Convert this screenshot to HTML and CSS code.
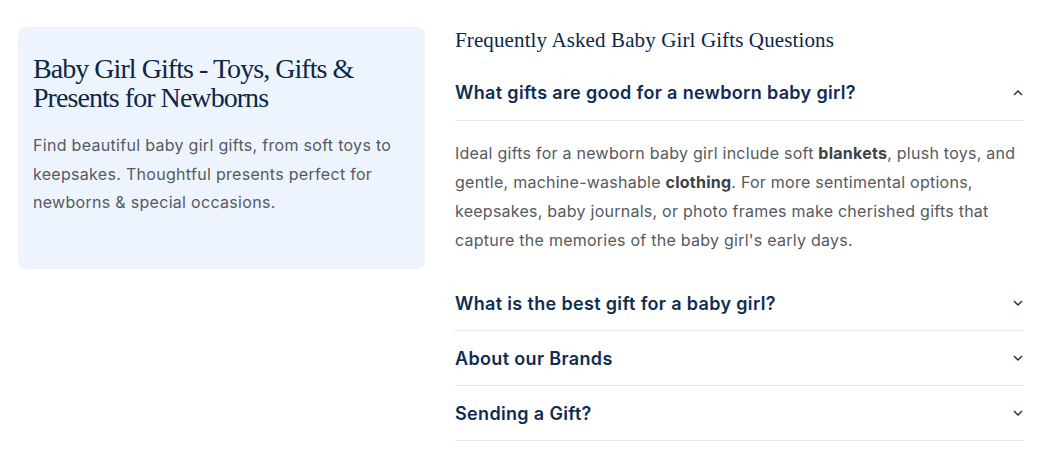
FILE: index.html
```html
<!DOCTYPE html>
<html>
<head>
<meta charset="utf-8">
<link rel="stylesheet" href="styles.css">
</head>
<body>
<div class="page">
  <aside class="card">
    <h1 class="card-title">Baby Girl Gifts - Toys, Gifts &amp; Presents for Newborns</h1>
    <p class="card-text">Find beautiful baby girl gifts, from soft toys to keepsakes. Thoughtful presents perfect for newborns &amp; special occasions.</p>
  </aside>
  <section class="faq">
    <h2 class="faq-title">Frequently Asked Baby Girl Gifts Questions</h2>
    <div class="item open">
      <div class="q"><span>What gifts are good for a newborn baby girl?</span>
        <svg class="chev" viewBox="0 0 12 8" width="12" height="8"><path d="M2 6 L6 2 L10 6" fill="none" stroke="#0f2d52" stroke-width="1.4"/></svg>
      </div>
      <p class="a">Ideal gifts for a newborn baby girl include soft <b>blankets</b>, plush toys, and gentle, machine-washable <b>clothing</b>. For more sentimental options, keepsakes, baby journals, or photo frames make cherished gifts that capture the memories of the baby girl's early days.</p>
    </div>
    <div class="item">
      <div class="q"><span>What is the best gift for a baby girl?</span>
        <svg class="chev" viewBox="0 0 12 8" width="12" height="8"><path d="M2 2 L6 6 L10 2" fill="none" stroke="#0f2d52" stroke-width="1.4"/></svg>
      </div>
    </div>
    <div class="item">
      <div class="q"><span>About our Brands</span>
        <svg class="chev" viewBox="0 0 12 8" width="12" height="8"><path d="M2 2 L6 6 L10 2" fill="none" stroke="#0f2d52" stroke-width="1.4"/></svg>
      </div>
    </div>
    <div class="item">
      <div class="q"><span>Sending a Gift?</span>
        <svg class="chev" viewBox="0 0 12 8" width="12" height="8"><path d="M2 2 L6 6 L10 2" fill="none" stroke="#0f2d52" stroke-width="1.4"/></svg>
      </div>
    </div>
  </section>
</div>
</body>
</html>
```
FILE: styles.css
```css
* { box-sizing: border-box; }
html, body { margin: 0; padding: 0; background: #fff; }
.page {
  display: flex;
  align-items: flex-start;
  gap: 30px;
  padding: 27px 24px 0 18px;
}
.card {
  width: 407px;
  height: 242px;
  flex: none;
  background: #eef4fd;
  border-radius: 8px;
  padding: 27px 15px 0 15px;
}
.card-title {
  margin: 0;
  font-family: "Liberation Serif", "DejaVu Serif", serif;
  font-weight: normal;
  font-size: 28px;
  line-height: 29px;
  color: #0b2747;
  letter-spacing: -0.95px;
}
.card-text {
  margin: 19px 0 0;
  font-family: "Inter", "Liberation Sans", sans-serif;
  font-size: 16px;
  line-height: 28.5px;
  letter-spacing: 0.3px;
  color: #555a60;
}
.faq { flex: 1; }
.faq-title {
  margin: 0 0 12px;
  font-family: "Liberation Serif", "DejaVu Serif", serif;
  font-weight: normal;
  font-size: 21px;
  line-height: 26px;
  letter-spacing: 0.12px;
  color: #0b2747;
}
.item { border-bottom: 1px solid #e6e6e6; }
.item.open { border-bottom: none; }
.item.open .q { border-bottom: 1px solid #e6e6e6; height: 56px; }
.q {
  display: flex;
  justify-content: space-between;
  align-items: center;
  height: 54px;
  font-family: "Inter", "Liberation Sans", sans-serif;
  font-weight: 600;
  font-size: 18px;
  letter-spacing: 0.34px;
  color: #0f2d52;
}
.a {
  margin: 0;
  padding: 18px 0 21px;
  font-family: "Inter", "Liberation Sans", sans-serif;
  font-size: 16px;
  line-height: 29px;
  letter-spacing: 0.25px;
  color: #555a60;
}
.a b { color: #3d4146; font-weight: 700; }
```
